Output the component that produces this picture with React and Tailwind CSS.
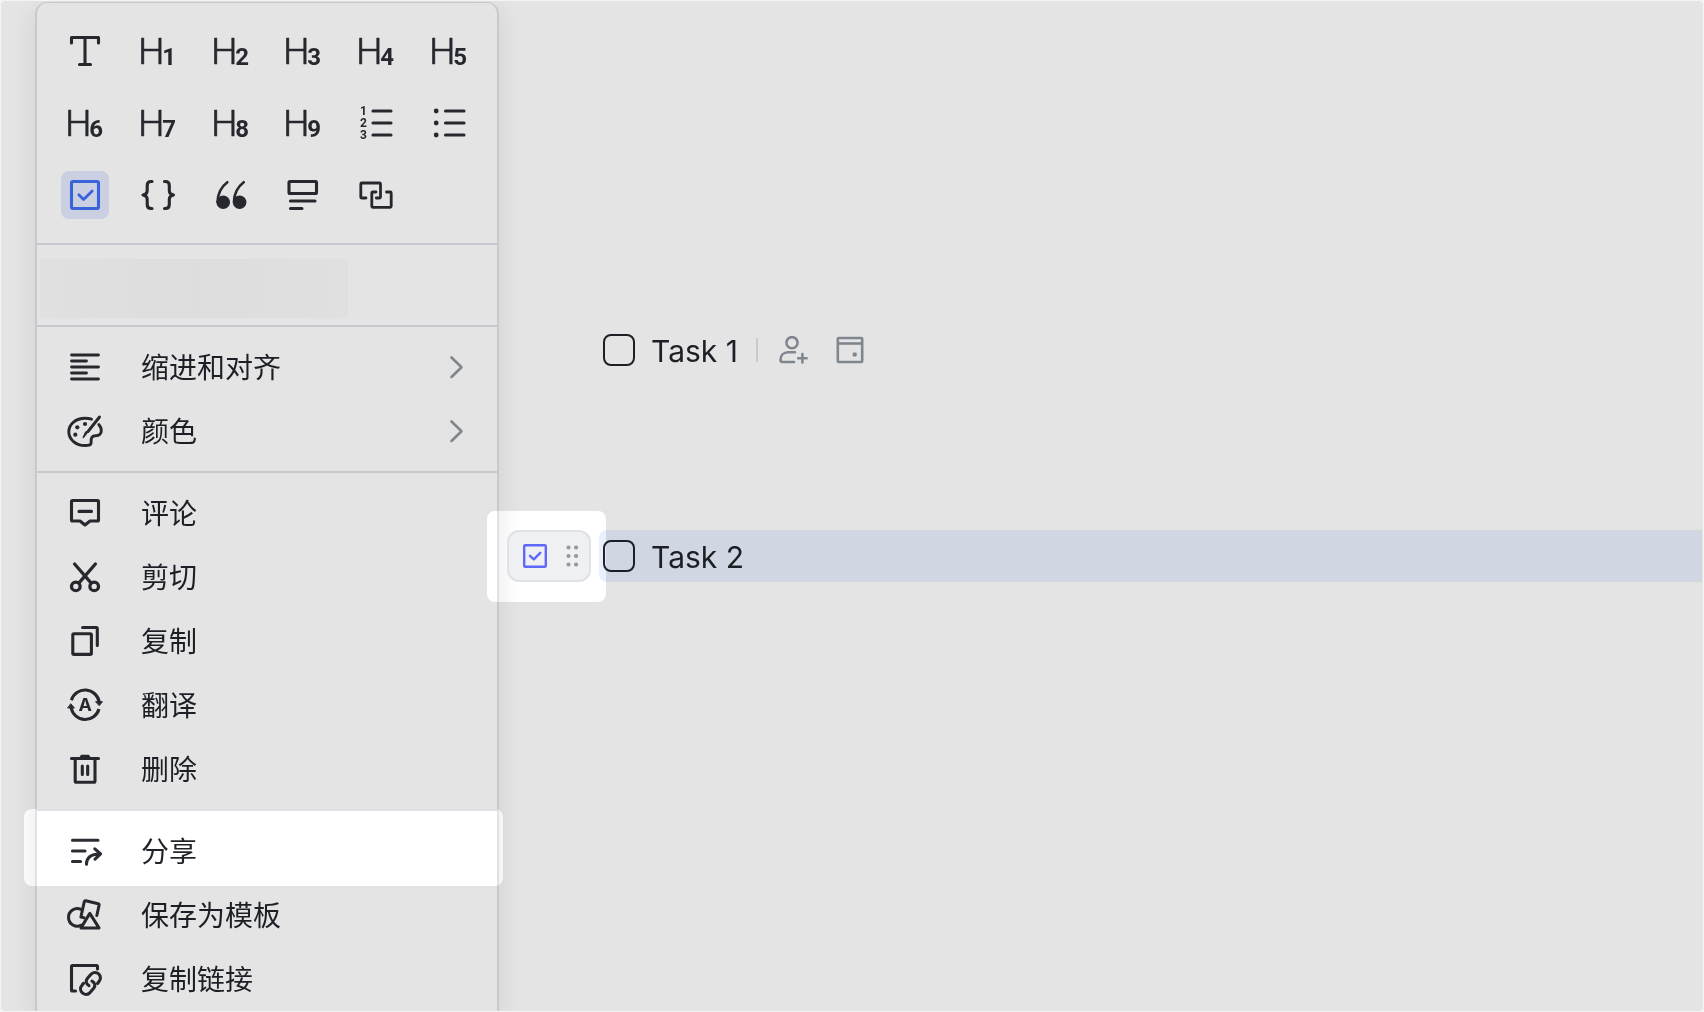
function Icon({ children, width = 3.1, className = 'size-9' }) {
  return (
    <svg
      viewBox="0 0 36 36"
      className={`${className} shrink-0 overflow-visible`}
      fill="none"
      stroke="currentColor"
      strokeWidth={width}
      strokeLinecap="round"
      strokeLinejoin="round"
      aria-hidden="true"
    >
      {children}
    </svg>
  );
}

function Heading({ level }) {
  return (
    <svg viewBox="0 0 36 36" className="size-9 shrink-0 overflow-visible" fill="currentColor" aria-hidden="true">
      <text x="11.3" y="31" textAnchor="middle" fontSize="37" stroke="currentColor" strokeWidth="0.7" strokeLinejoin="round" className="font-['Roboto'] font-light">H</text>
      <text x="29.2" y="31.5" textAnchor="middle" fontSize="24" className="font-['Roboto'] font-bold">{level}</text>
    </svg>
  );
}

const CheckSquare = () => (
  <Icon>
    <rect x="4.5" y="4.5" width="27" height="27" rx="1.5" />
    <path d="M11.8 17.8L16.6 22.6L25.2 14" strokeWidth="2.8" />
  </Icon>
);

const blocks = [
  { label: '正文', icon: (
    <Icon>
      <path d="M4.5 10V4.5H31.5V10M12.5 31.5H23.5" /><path d="M18 4.5V31" />
    </Icon>
  ) },
  ...[1, 2, 3, 4, 5, 6, 7, 8, 9].map((n) => ({ label: `H${n}`, icon: <Heading level={n} /> })),
  { label: '有序列表', icon: (
    <Icon>
      <path d="M15 6H33M15 18H33M15 30H33" />
      <g fill="currentColor" stroke="none" fontSize="12" textAnchor="middle" className="font-['Roboto'] font-bold">
        <text x="5.5" y="10">1</text><text x="5.5" y="22">2</text><text x="5.5" y="34">3</text>
      </g>
    </Icon>
  ) },
  { label: '无序列表', icon: (
    <Icon>
      <path d="M14.5 6H33M14.5 18H33M14.5 30H33" />
      <g fill="currentColor" stroke="none"><circle cx="5.2" cy="6" r="2.4" /><circle cx="5.2" cy="18" r="2.4" /><circle cx="5.2" cy="30" r="2.4" /></g>
    </Icon>
  ) },
  { label: '任务', selected: true, icon: <CheckSquare /> },
  { label: '代码块', icon: (
    <Icon>
      <path d="M12 4.5H11C8.5 4.5 7.2 6 7.2 8.5V13.5C7.2 16 6 17.4 3 18C6 18.6 7.2 20 7.2 22.5V27.5C7.2 30 8.5 31.5 11 31.5H12" />
      <path d="M24.5 4.5H25.5C28 4.5 29.3 6 29.3 8.5V13.5C29.3 16 30.5 17.4 33.5 18C30.5 18.6 29.3 20 29.3 22.5V27.5C29.3 30 28 31.5 25.5 31.5H24.5" />
    </Icon>
  ) },
  { label: '引用', icon: (
    <Icon width={2.6}>
      <path d="M14.3 5.2C8 10 4.6 16.5 4.6 25M30.7 5.2C24.4 10 21 16.5 21 25" />
      <g fill="currentColor" stroke="none"><circle cx="10.2" cy="25.2" r="6.8" /><circle cx="26.6" cy="25.2" r="6.8" /></g>
    </Icon>
  ) },
  { label: '高亮块', icon: (
    <Icon><rect x="4" y="4.5" width="27.5" height="12" rx="1" /><path d="M5.5 24H30M5.5 31.5H17" /></Icon>
  ) },
  { label: '同步块', icon: (
    <Icon width={2.8}>
      <path d="M8 21H3.8Q2.8 21 2.8 20V7Q2.8 6 3.8 6H21.5Q22.5 6 22.5 7V20Q22.5 21 21.5 21H18.3" />
      <path d="M18 15H14.8Q13.8 15 13.8 16V29.3Q13.8 30.3 14.8 30.3H32.2Q33.2 30.3 33.2 29.3V16Q33.2 15 32.2 15H28.5" />
    </Icon>
  ) },
];

const icons = {
  align: <Icon width={2.8}><path d="M4.5 6H31.5M4.5 12H19.5M4.5 18H31.5M4.5 24H19.5M4.5 30H31.5" /></Icon>,
  palette: (
    <Icon width={2.9}>
      <path d="M24.5 6.2C22.5 5.5 20.5 5.2 18 5.2C9 5.2 1.8 11 1.8 18.8C1.8 26.5 9 32.5 18 32.5C21 32.5 23.8 32.2 24 30.5C24.4 28 23.6 26.5 25 24.2C26.8 21.6 30 23.8 32.6 21.6C35.2 19.5 34.8 15 31.8 11.5" />
      <path d="M32.5 4L21 18.5" />
      <path d="M21 18.5L16.2 24.5L18.6 19.2Z" strokeWidth="1.4" fill="currentColor" />
      <g fill="currentColor" stroke="none"><circle cx="10.3" cy="14.3" r="2.1" /><circle cx="18" cy="11" r="2.1" /><circle cx="8.3" cy="21.7" r="2.1" /></g>
    </Icon>
  ),
  comment: <Icon><path d="M5.5 5.5H30.5Q31.5 5.5 31.5 6.5V25Q31.5 26 30.5 26H23L18 30L13 26H5.5Q4.5 26 4.5 25V6.5Q4.5 5.5 5.5 5.5ZM12 16.4H24.5" /></Icon>,
  cut: (
    <Icon width={3.3}>
      <circle cx="8.8" cy="27.4" r="4.3" /><circle cx="27.2" cy="27.4" r="4.3" />
      <path d="M7.6 5L24 23.8M28.4 5L12 23.8" />
    </Icon>
  ),
  copy: <Icon><rect x="5.8" y="10.8" width="18.6" height="20.6" rx="1.2" /><path d="M15.6 4.5H29.2Q30.3 4.5 30.3 5.6V22.5" /></Icon>,
  translate: (
    <Icon>
      <path d="M4.4 13.2A14.3 14.3 0 0 1 32.2 15M32 22A14.3 14.3 0 0 1 4.2 21" strokeLinecap="butt" />
      <path d="M29 14.7H35.4L32.4 18.4ZM1 21H7.4L4 17Z" fill="currentColor" strokeWidth="1" />
      <text x="18.2" y="24.4" textAnchor="middle" fontSize="18" fill="currentColor" stroke="none" className="font-['Inter'] font-bold">A</text>
    </Icon>
  ),
  trash: (
    <Icon>
      <path d="M4.5 7.5H31.5M8.2 8V30Q8.2 31.3 9.5 31.3H26.8Q28 31.3 28 30V8M15.3 15V23.5M20.7 15V23.5" />
      <path d="M13 7L14.5 4.5H21.5L23 7Z" fill="currentColor" strokeWidth="1.5" />
    </Icon>
  ),
  share: (
    <Icon>
      <path d="M5.5 7.3H31M5.5 18H18M5.5 28.5H13.5" />
      <path d="M19.5 31.3C19.5 24.5 24 21 33 21M27.8 15.8L33.6 20.8L28 26.2" />
    </Icon>
  ),
  template: (
    <Icon width={3}>
      <path d="M14 12.4A8.8 8.8 0 1 0 14.4 28.2" />
      <path d="M17 20.8L13.9 20L17.3 4.7Q17.6 3.5 18.8 3.8L31.2 6.7Q32.4 7 32.1 8.2L29.8 18.5" />
      <path d="M22.8 16.4L14 30.9H32Z" />
    </Icon>
  ),
  link: (
    <Icon>
      <path d="M30.5 8V5.6Q30.5 4.5 29.4 4.5H5.6Q4.5 4.5 4.5 5.6V29Q4.5 30 5.6 30H8.5" />
      <path d="M30.5 22.5L32 20.5A5.3 5.3 0 0 0 24 13.2L20.3 17.5C18.3 20 19 23 22 24.6" />
      <path d="M16.5 22.3L15 24.3A5.3 5.3 0 0 0 23 31.6L26.7 27.3C28.7 24.8 28 21.8 25 20.2" />
    </Icon>
  ),
};

function MenuItem({ icon, label, submenu }) {
  return (
    <button type="button" className="flex h-16 w-full items-center pr-[30px] pl-[30px] text-left">
      {icons[icon]}
      <span className="ml-[38px] flex-1 pt-0.5 text-[28px] leading-10 whitespace-nowrap text-[#1c1f25]">{label}</span>
      {submenu && (
        <svg viewBox="0 0 22 36" className="h-9 w-[22px] text-[#80868e]" fill="none" stroke="currentColor" strokeWidth="2.6" strokeLinecap="round" strokeLinejoin="round" aria-hidden="true">
          <path d="M6.5 8.5L16.5 18.2L6.5 28" />
        </svg>
      )}
    </button>
  );
}

// Brightens whatever lies beneath it back to full white level.
function Spotlight({ className }) {
  return <span aria-hidden="true" className={`pointer-events-none absolute rounded-lg bg-[#1b1b1b] mix-blend-color-dodge ${className}`} />;
}

const section = 'border-t-2 border-[#c8c9ce] py-2';

function BlockMenu() {
  return (
    <nav aria-label="块菜单" className="mt-px ml-[34px] w-[464px] shrink-0 self-stretch rounded-t-xl border-x-2 border-t border-[#c8c9ce] shadow-[0_8px_24px_rgba(31,35,41,0.1)]">
      <div className="grid grid-cols-[repeat(6,48px)] justify-between gap-y-6 p-6">
        {blocks.map((b) => (
          <button
            key={b.label}
            type="button"
            aria-label={b.label}
            aria-pressed={!!b.selected}
            className={b.selected ? 'flex size-12 items-center justify-center rounded-lg bg-[#cbcfe2] text-[#3a62d9]' : 'flex size-12 items-center justify-center rounded-lg'}
          >
            {b.icon}
          </button>
        ))}
      </div>
      <div className="h-[82px] border-t-2 border-[#c8c9ce] pt-[14px] pl-[3px]">
        <div className="h-[59px] w-[308px] bg-linear-to-r from-[#e0e0e0] via-[#dddddd] to-[#e0e0e0]" />
      </div>
      <div className={section}>
        <MenuItem icon="align" label="缩进和对齐" submenu />
        <MenuItem icon="palette" label="颜色" submenu />
      </div>
      <div className={section}>
        <MenuItem icon="comment" label="评论" />
        <MenuItem icon="cut" label="剪切" />
        <MenuItem icon="copy" label="复制" />
        <MenuItem icon="translate" label="翻译" />
        <MenuItem icon="trash" label="删除" />
      </div>
      <div className="border-t-2 border-[#c8c9ce] pt-2">
        <div className="relative">
          <MenuItem icon="share" label="分享" />
          <Spotlight className="-top-[10px] -right-[6px] -bottom-[3px] -left-[13px]" />
        </div>
        <MenuItem icon="template" label="保存为模板" />
        <MenuItem icon="link" label="复制链接" />
      </div>
    </nav>
  );
}

function Task({ label }) {
  return (
    <label className="flex items-center gap-4 text-[30px] leading-10 whitespace-nowrap text-[#1c1f25]">
      <input type="checkbox" className="size-8 shrink-0 appearance-none rounded-lg border-2 border-[#1c1f25]" />
      <span className="pt-0.5">{label}</span>
    </label>
  );
}

export default function App() {
  return (
    <main className="min-h-screen bg-[#f4f4f4] p-px font-['Inter','Noto_Sans_CJK_SC',sans-serif] text-[#26282e]">
      <div className="flex min-h-[calc(100vh-2px)] overflow-hidden rounded bg-[#e4e4e4]">
        <BlockMenu />
        <section className="flex min-w-0 flex-1 flex-col gap-[154px] pt-[323px]">
          <div className="flex h-[52px] items-center pl-[104px]">
            <Task label="Task 1" />
            <span className="ml-[18px] h-6 w-0.5 bg-[#c9c9cb]" />
            <button type="button" aria-label="添加负责人" className="ml-[18px] text-[#80868e]">
              <svg viewBox="0 0 36 36" className="size-9" fill="none" stroke="currentColor" strokeWidth="2.6" strokeLinecap="round" strokeLinejoin="round" aria-hidden="true">
                <circle cx="16" cy="10.7" r="5.6" />
                <path d="M19 20.3H12C7.5 20.3 4.5 23.5 4.5 28Q4.5 30 6.5 30H18M26.4 22V30.5M22.2 26.2H30.6" />
              </svg>
            </button>
            <button type="button" aria-label="截止时间" className="ml-5 text-[#80868e]">
              <svg viewBox="0 0 36 36" className="size-9" fill="none" stroke="currentColor" strokeWidth="2.6" strokeLinejoin="round" aria-hidden="true">
                <rect x="5.8" y="6" width="24.4" height="24" rx="1" />
                <path d="M5.8 11.5H30.2" />
                <rect x="20.7" y="20.5" width="4" height="4" rx="1" fill="currentColor" stroke="none" />
              </svg>
            </button>
          </div>
          <div className="flex h-[52px] gap-2 pl-2">
            <div className="relative w-[84px] shrink-0">
              <button type="button" aria-label="块操作" className="flex h-full w-full items-center gap-[19px] rounded-xl border-2 border-[#c8c9cd] bg-[#d6d7d8] pl-[14px]">
                <svg viewBox="0 0 24 24" className="size-6 shrink-0 text-[#555de0]" fill="none" stroke="currentColor" strokeWidth="2.4" strokeLinecap="round" strokeLinejoin="round" aria-hidden="true">
                  <rect x="1.2" y="1.2" width="21.6" height="21.6" rx="1" />
                  <path d="M7 11.8L10.8 15.4L17.3 8.8" />
                </svg>
                <svg viewBox="0 0 12 24" className="h-6 w-3 shrink-0 text-[#87888e]" fill="currentColor" aria-hidden="true">
                  {[3.5, 12, 20.5].map((y) => (
                    <g key={y}><circle cx="2.5" cy={y} r="2.1" /><circle cx="10" cy={y} r="2.1" /></g>
                  ))}
                </svg>
              </button>
              <Spotlight className="-top-[19px] -right-[15px] -bottom-5 -left-5 z-10" />
            </div>
            <div className="mr-px flex flex-1 items-center rounded-l-lg bg-[#d0d6e2] pl-1">
              <Task label="Task 2" />
            </div>
          </div>
        </section>
      </div>
    </main>
  );
}
